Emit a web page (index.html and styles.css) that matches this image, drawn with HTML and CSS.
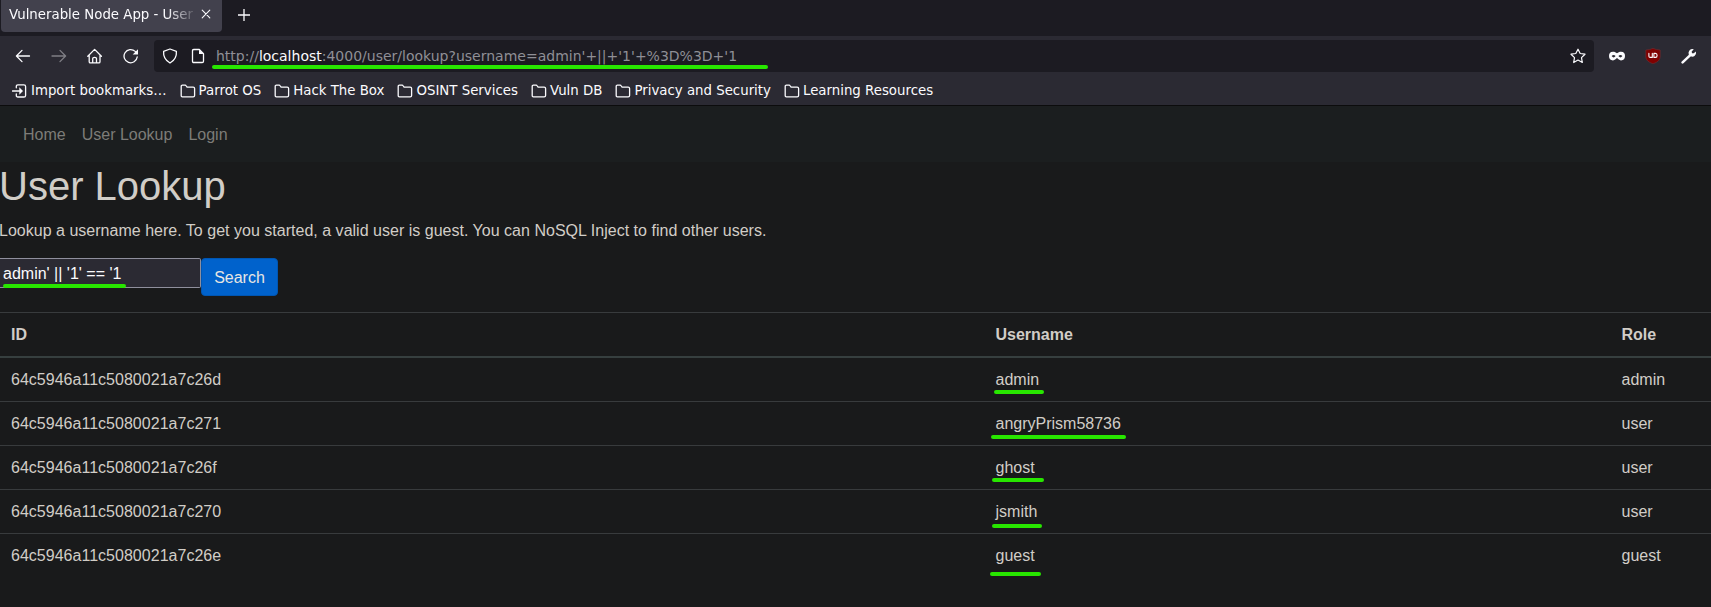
FILE: index.html
```html
<!DOCTYPE html>
<html lang="en">
<head>
<meta charset="utf-8">
<title>Vulnerable Node App - User Lookup</title>
<link rel="stylesheet" href="styles.css">
</head>
<body>
<svg class="defs" aria-hidden="true">
  <symbol id="folder" viewBox="0 0 16 16"><path d="M1.2 12.6V3.4Q1.2 2.2 2.4 2.2H5Q5.8 2.2 6.3 3L7.1 4.2H13.2Q14.6 4.2 14.6 5.6V12.4Q14.6 13.8 13.2 13.8H2.4Q1.2 13.8 1.2 12.6Z"/></symbol>
</svg>
<header class="browser">
  <div class="tabs">
    <div class="tab"><span class="tab-title">Vulnerable Node App - User Lookup</span>
      <svg class="close" viewBox="0 0 10 10"><path d="M1.2 1.2L8.8 8.8M8.8 1.2L1.2 8.8"/></svg>
    </div>
    <svg class="plus" viewBox="0 0 12 12"><path d="M6 0V12M0 6H12"/></svg>
  </div>
  <div class="toolbar">
    <div class="nav-buttons">
      <svg class="icon" viewBox="0 0 16 16"><path d="M14.5 8H1.5M7 2.4L1.4 8L7 13.6"/></svg>
      <svg class="icon dim" viewBox="0 0 16 16"><path d="M1 8H14.5M9 2.4L14.6 8L9 13.6"/></svg>
      <svg class="icon" viewBox="0 0 16 16"><path d="M.8 8.2L7.6 1.4L14.4 8.2M2.2 7V13.7Q2.2 14.9 3.4 14.9H11.8Q13 14.9 13 13.7V7M5.7 14.6V10.6Q5.7 9.3 7.6 9.3T9.5 10.6V14.6"/></svg>
      <svg class="icon" viewBox="0 0 16 16"><path d="M14.2 9A6.6 6.6 0 1 1 12.2 3.4L13.8 5"/><path class="fill" d="M15 1.2V6.5H9.7Z"/></svg>
    </div>
    <div class="urlbar">
      <svg class="icon" viewBox="0 0 16 16"><path d="M8 1L14.4 3.3Q15 11.2 8 15Q1 11.2 1.6 3.3Z"/></svg>
      <svg class="icon page-icon" viewBox="0 0 16 16"><path d="M3.8 1.5H9.3L13.5 5.7V13.2Q13.5 14.5 12.2 14.5H3.8Q2.5 14.5 2.5 13.2V2.8Q2.5 1.5 3.8 1.5Z"/><path class="fill" d="M9 1.4L13.6 6H9Z"/></svg>
      <span class="url">http://<b>localhost</b>:4000/user/lookup?username=admin'+||+'1'+%3D%3D+'1<i class="mark mark-url"></i></span>
      <svg class="icon star" viewBox="0 0 16 16"><path d="M8 1.2L10.2 5.5L15 6.2L11.5 9.6L12.3 14.5L8 12.1L3.7 14.5L4.5 9.6L1 6.2L5.8 5.5Z"/></svg>
    </div>
    <div class="extensions">
      <svg class="ext" viewBox="0 0 16 16"><path class="fill" fill-rule="evenodd" d="M4 3.7C5.7 3.7 6.8 4.3 8 5.3C9.2 4.3 10.3 3.7 12 3.7C15 3.7 16 5.4 16 8C16 10.7 14.7 12.4 12 12.4C10.3 12.4 9.2 11 8 10.1C6.8 11 5.7 12.4 4 12.4C1.3 12.4 0 10.7 0 8C0 5.4 1 3.7 4 3.7ZM2.6 8.1Q4.7 10.7 6.6 8.1Q4.6 5.7 2.6 8.1ZM9.4 8.1Q11.4 10.7 13.4 8.1Q11.4 5.7 9.4 8.1Z"/></svg>
      <svg class="ext" viewBox="0 0 16 16"><path class="shield" d="M8 .3Q11 2 15.2 2V9Q15 13.5 8 15.8Q1 13.5 .8 9V2Q5 2 8 .3Z"/><path class="shield-mark" d="M3.9 5.4V8.2Q3.9 9.4 5.3 9.4H7.3V5.4M8.9 5.4H10.4Q12.1 5.4 12.1 7.4T10.4 9.4H8.9Z"/></svg>
      <svg class="ext" viewBox="0 0 16 16"><path d="M1.6 14.4L9 7.4" class="handle"/><path class="fill" d="M12.8 1.2L10.7 3.6L11 5.2L12.7 5.3L15 3.4Q15.6 6.4 13.5 8Q11.7 9.2 9.5 8.2L7.7 6.4Q7 4 8.6 2.2Q10.3.5 12.8 1.2Z"/></svg>
    </div>
  </div>
  <nav class="bookmarks">
    <a class="bookmark"><svg viewBox="0 0 16 16"><path d="M4.3 4.8V3.4Q4.3 1.8 5.9 1.8H11.9Q13.6 1.8 13.6 3.4V12.4Q13.6 14 11.9 14H5.9Q4.3 14 4.3 12.4V11M.5 8H9"/><path class="fill" d="M7.3 4.3L11 8L7.3 11.7Z"/></svg>Import bookmarks…</a>
    <a class="bookmark"><svg viewBox="0 0 16 16"><use href="#folder"/></svg>Parrot OS</a>
    <a class="bookmark"><svg viewBox="0 0 16 16"><use href="#folder"/></svg>Hack The Box</a>
    <a class="bookmark"><svg viewBox="0 0 16 16"><use href="#folder"/></svg>OSINT Services</a>
    <a class="bookmark"><svg viewBox="0 0 16 16"><use href="#folder"/></svg>Vuln DB</a>
    <a class="bookmark"><svg viewBox="0 0 16 16"><use href="#folder"/></svg>Privacy and Security</a>
    <a class="bookmark"><svg viewBox="0 0 16 16"><use href="#folder"/></svg>Learning Resources</a>
  </nav>
</header>
<nav class="navbar"><a>Home</a><a>User Lookup</a><a>Login</a></nav>
<main>
  <h1>User Lookup</h1>
  <p>Lookup a username here. To get you started, a valid user is guest. You can NoSQL Inject to find other users.</p>
  <form class="search">
    <div class="field"><input type="text" value="admin' || '1' == '1" aria-label="Username"><i class="mark mark-field"></i></div>
    <button type="button">Search</button>
  </form>
  <table>
    <colgroup><col class="col-id"><col class="col-name"><col></colgroup>
    <thead><tr><th>ID</th><th>Username</th><th>Role</th></tr></thead>
    <tbody>
      <tr><td>64c5946a11c5080021a7c26d</td><td><span class="name">admin<i class="mark mark-admin"></i></span></td><td>admin</td></tr>
      <tr><td>64c5946a11c5080021a7c271</td><td><span class="name">angryPrism58736<i class="mark mark-angry"></i></span></td><td>user</td></tr>
      <tr><td>64c5946a11c5080021a7c26f</td><td><span class="name">ghost<i class="mark mark-ghost"></i></span></td><td>user</td></tr>
      <tr><td>64c5946a11c5080021a7c270</td><td><span class="name">jsmith<i class="mark mark-jsmith"></i></span></td><td>user</td></tr>
      <tr><td>64c5946a11c5080021a7c26e</td><td><span class="name">guest<i class="mark mark-guest"></i></span></td><td>guest</td></tr>
    </tbody>
  </table>
</main>
</body>
</html>
```
FILE: styles.css
```css
* { box-sizing: border-box; }
body { margin: 0; height: 607px; overflow: hidden; background: #191a1b; color: #d1cdc7; font: 16px/24px "Liberation Sans", Arial, sans-serif; }
svg { fill: none; stroke: #fbfbfe; stroke-width: 1.3; stroke-linejoin: round; stroke-linecap: round; flex: none; }
svg .fill { fill: #fbfbfe; stroke: none; }
.defs { display: none; }

.browser { height: 106px; background: #2b2a33; border-bottom: 1px solid #0c0c0d; color: #fbfbfe; font: 13.33px/16px "DejaVu Sans", sans-serif; }
.tabs { display: flex; height: 36px; background: #1c1b22; }
.tab { display: flex; align-items: center; width: 221px; height: 32px; margin-left: 1px; padding: 0 11px 4px 8px; background: #42414d; border-radius: 0 0 4px 4px; }
.tab-title { flex: 1; padding-top: 1px; overflow: hidden; white-space: nowrap; -webkit-mask-image: linear-gradient(to left, transparent 3px, #000 34px); mask-image: linear-gradient(to left, transparent 3px, #000 34px); }
.close { width: 10px; height: 10px; stroke-width: 1.1; }
.plus { width: 12px; height: 12px; margin: 9px 0 0 16px; stroke-linecap: butt; }
.toolbar { display: flex; align-items: center; height: 40px; }
.nav-buttons { display: flex; gap: 20px; width: 154px; padding-left: 15px; }
.icon { width: 16px; height: 16px; }
.dim { opacity: .4; }
.urlbar { display: flex; align-items: center; width: 1440px; height: 32px; padding: 0 8px; background: #1c1b22; border-radius: 4px; }
.page-icon { margin-left: 12px; }
.url { position: relative; flex: 1; margin-left: 10px; color: #8f8f96; font-size: 14px; white-space: nowrap; }
.url b { color: #fbfbfe; font-weight: normal; }
.star { stroke-width: 1.2; }
.extensions { display: flex; gap: 20px; padding-left: 15px; }
.ext { width: 16px; height: 16px; }
.shield { fill: #800000; stroke: #6a3035; stroke-width: .6; }
.shield-mark { stroke-width: 1.1; }
.handle { stroke-width: 2.5; }
.bookmarks { display: flex; gap: 13px; padding: 6px 0 0 12px; }
.bookmark { display: flex; align-items: center; gap: 3px; height: 17px; white-space: nowrap; }
.bookmark svg { width: 16px; height: 16px; }

.navbar { display: flex; gap: 16px; height: 56px; padding: 17px 23px 15px; background: #1b1e1f; color: #7d7c78; }
h1 { margin: 0 0 8px -1px; font-size: 40px; line-height: 48px; font-weight: normal; }
p { margin: 0 0 15px -1px; padding-top: 1px; letter-spacing: .015px; }
.search { display: flex; align-items: flex-start; height: 38px; margin-bottom: 16px; }
.field { position: relative; width: 201px; height: 30px; }
input { display: block; width: 100%; height: 30px; padding: 2px 3px 0; border: 1px solid #8f8f9d; border-left: 0; border-radius: 0 2px 2px 0; background: #2b2a33; color: #fbfbfe; font: inherit; }
button { width: 77px; height: 38px; padding: 1px 0 0; border: 1px solid #0056b3; border-radius: 4px; background: #0062cc; color: #e8e6e3; font: inherit; }
table { width: 100%; table-layout: fixed; border-spacing: 0; }
.col-id { width: 984px; }
.col-name { width: 626px; }
th, td { height: 44px; padding: 10px 11.5px 0; border-top: 1px solid #383b3d; text-align: left; vertical-align: top; }
th:first-child, td:first-child { padding-left: 11px; letter-spacing: .02px; }
th { height: 46px; border-bottom: 2px solid #363f3f; }
tbody tr:first-child td { height: 43px; border-top: 0; }
.name { position: relative; }

/* highlighter strokes */
.mark { position: absolute; height: 4px; border-radius: 2px; background: #28e600; }
.mark-url { left: -4px; top: 17px; width: 556px; }
.mark-field { left: 3px; top: 26px; width: 123px; }
.mark-admin { left: -2px; top: 19px; width: 50px; }
.mark-angry { left: -5px; top: 20px; width: 135px; }
.mark-ghost { left: -4px; top: 19px; width: 52px; }
.mark-jsmith { left: -4px; top: 21px; width: 50px; }
.mark-guest { left: -6px; top: 25px; width: 51px; }
```
